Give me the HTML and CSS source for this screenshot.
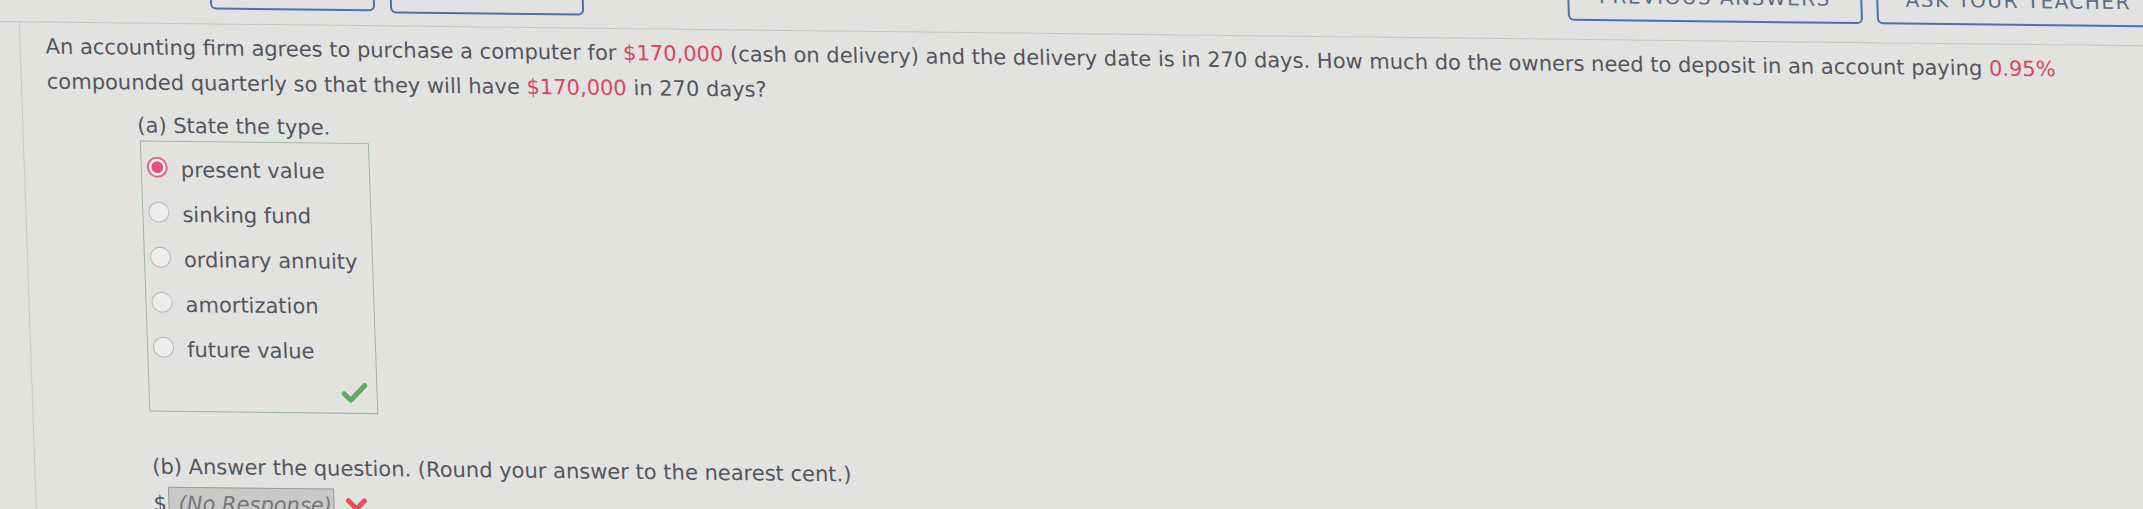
FILE: index.html
```html
<!DOCTYPE html>
<html lang="en">
<head>
<meta charset="utf-8">
<title>Question</title>
<link rel="stylesheet" href="styles.css">
</head>
<body>
<div class="page">
  <div class="header">
    <button class="btn btn-details" type="button">DETAILS</button>
    <button class="btn btn-notes" type="button">MY NOTES</button>
    <button class="btn btn-prev" type="button">PREVIOUS ANSWERS</button>
    <button class="btn btn-ask" type="button">ASK YOUR TEACHER</button>
  </div>
  <div class="panel">
    <p class="question">An accounting firm agrees to purchase a computer for <span class="red">$170,000</span> (cash on delivery) and the delivery date is in 270 days. How much do the owners need to deposit in an account paying <span class="red">0.95%</span><br>compounded quarterly so that they will have <span class="red">$170,000</span> in 270 days?</p>
    <div class="parts">
      <div class="part-label">(a) State the type.</div>
      <div class="choices">
        <div class="choice"><span class="radio radio-on"></span><span class="choice-text">present value</span></div>
        <div class="choice"><span class="radio"></span><span class="choice-text">sinking fund</span></div>
        <div class="choice"><span class="radio"></span><span class="choice-text">ordinary annuity</span></div>
        <div class="choice"><span class="radio"></span><span class="choice-text">amortization</span></div>
        <div class="choice"><span class="radio"></span><span class="choice-text">future value</span></div>
        <div class="mark-row">
          <svg class="check" width="26" height="20" viewBox="0 0 26 20"><path d="M2.5 11 L9 17.5 L23.5 2.5" fill="none" stroke="#5fae5c" stroke-width="5" stroke-linecap="round" stroke-linejoin="round"/></svg>
        </div>
      </div>
      <div class="part-label part-b">(b) Answer the question. (Round your answer to the nearest cent.)</div>
      <div class="answer-row">
        <span class="dollar">$</span>
        <span class="answer-box">(No Response)</span>
        <svg class="cross" width="22" height="22" viewBox="0 0 22 22"><path d="M3 3 L19 19 M19 3 L3 19" fill="none" stroke="#e0525d" stroke-width="5" stroke-linecap="round"/></svg>
      </div>
    </div>
  </div>
</div>
</body>
</html>
```
FILE: styles.css
```css
html, body {
  margin: 0;
  padding: 0;
  background: #e2e3e1;
  overflow: hidden;
}
body {
  width: 2143px;
  height: 509px;
  font-family: "DejaVu Sans", Verdana, sans-serif;
  color: #55555d;
}
.page {
  width: 2200px;
  height: 560px;
  transform-origin: 0 0;
  transform: skew(2deg, 0.65deg);
}
.header {
  height: 21px;
  border-bottom: 1px solid #c6c7c5;
  display: flex;
  align-items: flex-start;
}
.btn {
  margin-top: -44px;
  height: 47px;
  line-height: 40px;
  padding: 0 0 5px 0;
  background: transparent;
  border: 2px solid #4e72a6;
  border-radius: 0 0 6px 6px;
  font-family: "DejaVu Sans", Verdana, sans-serif;
  font-size: 20px;
  letter-spacing: 1.5px;
  color: #5d6c86;
  text-align: center;
  white-space: nowrap;
}
.btn-details { margin-left: 210px; width: 165px; margin-top: -40px; }
.btn-notes { margin-left: 15px; width: 194px; margin-top: -38px; }
.btn-prev { margin-left: auto; width: 295px; }
.btn-ask { margin-left: 14px; width: 284px; margin-right: 39px; }
.panel {
  margin-left: 18px;
  border-left: 1px solid #cbccca;
  padding-left: 25px;
  height: 600px;
}
.question {
  margin: 0;
  padding-top: 7px;
  font-size: 21px;
  line-height: 35px;
  white-space: nowrap;
}
.red { color: #d9475c; }
.parts {
  margin-left: 89px;
}
.part-label {
  margin-top: 10px;
  font-size: 21px;
  line-height: 30px;
  white-space: nowrap;
}
.choices {
  margin-left: 2px;
  width: 227px;
  border: 1px solid #9fb49d;
  padding-top: 6px;
  height: 263px;
}
.choice {
  display: flex;
  align-items: center;
  height: 45px;
  padding-left: 5px;
}
.radio {
  flex: none;
  width: 21px;
  height: 21px;
  border-radius: 50%;
  box-sizing: border-box;
  border: 1.5px solid #b8b8b8;
  background: #ededec;
  margin-bottom: 6px;
}
.radio-on {
  border: 2.5px solid #e2668c;
  background: radial-gradient(circle, #e5507c 0 5.5px, #f4f1f2 6.2px);
}
.choice-text {
  margin-left: 13px;
  font-size: 21px;
  line-height: 45px;
  white-space: nowrap;
}
.mark-row {
  display: flex;
  justify-content: flex-end;
  padding: 8px 9px 0 0;
}
.part-b {
  margin-top: 40px;
  margin-left: 3px;
}
.answer-row {
  display: flex;
  align-items: flex-start;
  margin-top: 5px;
  margin-left: 3px;
  font-size: 21px;
}
.dollar {
  line-height: 24px;
  padding-top: 5px;
  width: 15px;
}
.answer-box {
  width: 155px;
  height: 34px;
  border: 1px solid #9b9b9b;
  background: #c9cac7;
  padding: 4px 0 0 9px;
  line-height: 24px;
  font-style: italic;
  color: #75757a;
  white-space: nowrap;
}
.cross {
  margin-left: 11px;
  margin-top: 9px;
}
```
